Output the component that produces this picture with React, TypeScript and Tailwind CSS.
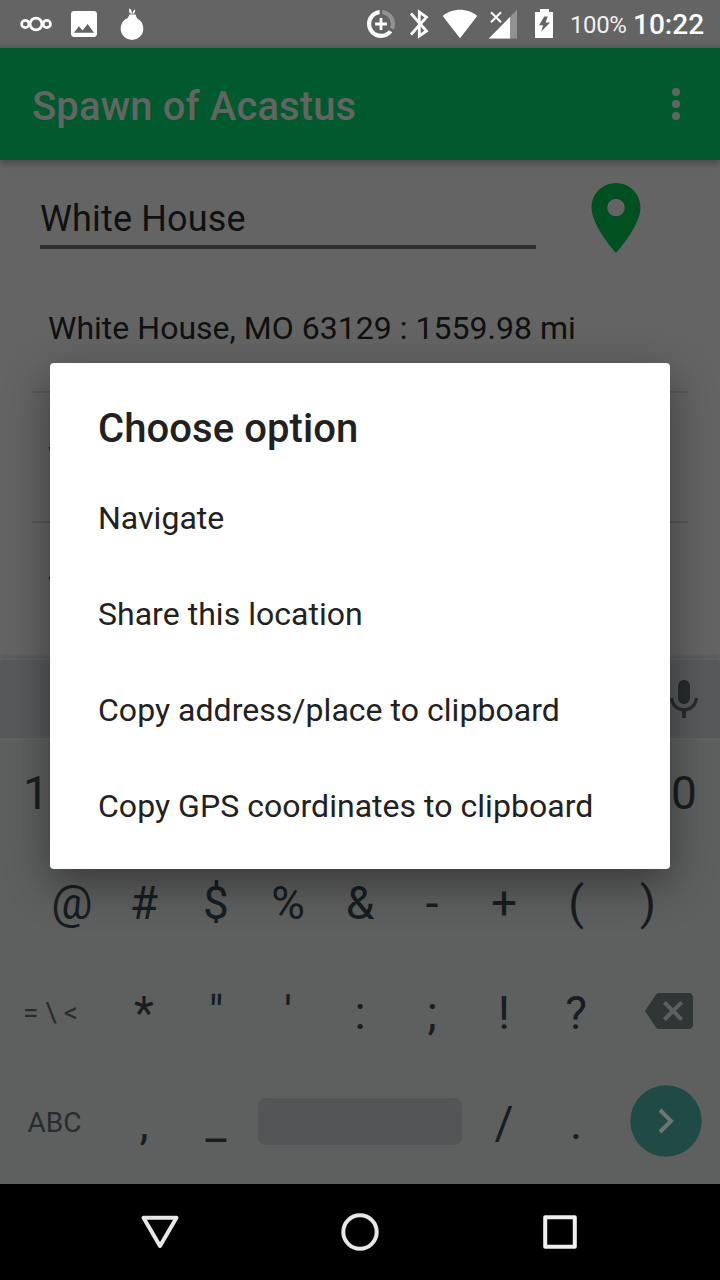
import type { ReactNode } from "react";

function StatusIcon({ viewBox, className, children }: { viewBox: string; className: string; children: ReactNode }) {
  return (
    <svg viewBox={viewBox} className={`h-12 shrink-0 ${className}`} fill="#fff">
      {children}
    </svg>
  );
}

function StatusBar() {
  return (
    <header className="flex h-12 items-center bg-gradient-to-b from-[#646464] from-85% to-[#5c5c5c] text-white">
      <StatusIcon viewBox="0 0 56 48" className="w-14">
        <g fill="none" stroke="#fff" strokeWidth="2.7">
          <circle cx="25.3" cy="24" r="3.7" />
          <circle cx="36" cy="24" r="5.9" />
          <circle cx="46.8" cy="24" r="3.7" />
        </g>
      </StatusIcon>
      <StatusIcon viewBox="56 0 52 48" className="w-[52px]">
        <path
          transform="translate(66.67 6.67) scale(1.444)"
          d="M21 19V5c0-1.1-.9-2-2-2H5c-1.1 0-2 .9-2 2v14c0 1.100.9 2 2 2h14c1.100 0 2-.9 2-2zM8.500 13.500l2.500 3.010L14.500 12l4.500 6H5l3.500-4.500z"
        />
      </StatusIcon>
      <StatusIcon viewBox="108 0 48 48" className="w-12">
        <circle cx="132" cy="28.600" r="11.300" />
        <path d="M127.500 18.500L129.500 14.500h6l1.500 4zM130.800 13.800C128.600 12.500 128.800 10.500 129.600 8.300c2 1.800 2.500 3.300 2.200 5.500zM132.500 13.800c.1-2 .7-3.600 2.600-4.300.3 2-.2 3.400-1.400 4.300z" />
      </StatusIcon>
      <div className="grow" />
      <StatusIcon viewBox="360 0 42 48" className="w-[42px]">
        <g transform="translate(364.200 7.200) scale(1.400)">
          <path
            opacity=".3"
            d="M13 2.050v3.030c3.390.49 6 3.390 6 6.920 0 .9-.18 1.750-.48 2.540l2.600 1.530c.56-1.240.88-2.620.88-4.070 0-5.180-3.950-9.450-9-9.950z"
          />
          <path d="M12 19c-3.870 0-7-3.130-7-7 0-3.530 2.610-6.430 6-6.920V2.050c-5.060.5-9 4.760-9 9.950 0 5.520 4.470 10 9.990 10 3.310 0 6.240-1.610 8.060-4.090l-2.600-1.530A6.950 6.950 0 0 1 12 19z" />
          <path d="M11 7.800h2v3.200h3.200v2H13v3.200h-2V13H7.800v-2H11z" />
        </g>
      </StatusIcon>
      <StatusIcon viewBox="402 0 34 48" className="w-[34px]">
        <path
          d="M411 13.500L426.500 31L419.300 36V12L426.500 17.200L411 34.500"
          fill="none"
          stroke="#fff"
          strokeWidth="2.800"
        />
      </StatusIcon>
      <StatusIcon viewBox="436 0 46 48" className="w-[46px]">
        <path d="M442.700 16C452 7.700 468 7.700 477.200 16L460 38.200z" />
      </StatusIcon>
      <StatusIcon viewBox="482 0 44 48" className="w-11">
        <path opacity=".3" d="M488.800 38.500L517 9.800V38.500z" />
        <path d="M488.800 38.500L510 17V38.500z" />
        <path d="M491 12.200L501 22.200M501 12.200L491 22.200" stroke="#fff" strokeWidth="2" />
      </StatusIcon>
      <StatusIcon viewBox="526 0 36 48" className="w-9">
        <path d="M540 9h9v3h4v26h-18V12h5z" />
        <path d="M544.300 16.500L539 25.300h4.200L541.200 31.500L550.200 22.500h-4.700L547.800 16.500z" fill="#646464" />
      </StatusIcon>
      <span className="ml-2 mt-0.5 w-[63px] shrink-0 whitespace-nowrap text-[24px] leading-[48px] tracking-[-0.4px] text-[#f0f0f0]">
        100%
      </span>
      <span className="mt-0.5 w-[87px] shrink-0 whitespace-nowrap text-[28px] font-medium leading-[48px]">10:22</span>
    </header>
  );
}

function AppBar() {
  return (
    <div className="relative flex h-28 shrink-0 items-center justify-between bg-[#005a2e] pl-8 pr-6 shadow-[0_3px_7px_rgba(0,0,0,0.3)]">
      <h1 className="pt-1.5 text-[40px] font-medium leading-[48px] tracking-[0.1px] text-[#646464]">Spawn of Acastus</h1>
      <svg className="h-10 w-10" viewBox="0 0 40 40" fill="#646464">
        <circle cx="20" cy="8" r="4" />
        <circle cx="20" cy="20" r="4" />
        <circle cx="20" cy="32" r="4" />
      </svg>
    </div>
  );
}

const places = ["White House, MO 63129 : 1559.98 mi", "W", "W"];

function Search() {
  return (
    <main className="h-[498px] shrink-0 overflow-hidden bg-[#646464] text-[#101010]">
      <div className="flex h-[103px] pl-10">
        <div className="mt-8 h-[57px] w-[496px] border-b-4 border-[#2e302f] text-[36px] leading-[55px] tracking-[0.15px]">
          White House
        </div>
        <svg className="ml-[38px] mt-4 h-[84px] w-[84px]" viewBox="0 0 24 24" fill="#005020">
          <path d="M12 2C8.130 2 5 5.130 5 9c0 5.250 7 13 7 13s7-7.750 7-13c0-3.870-3.130-7-7-7zm0 9.500a2.500 2.500 0 0 1 0-5 2.500 2.500 0 0 1 0 5z" />
        </svg>
      </div>
      <ul className="mx-8 divide-y-2 divide-[#575757]">
        {places.map((place, i) => (
          <li key={i} className="h-[130px] pl-4 text-[32px] leading-[130px] tracking-[0.02px]">
            {place}
          </li>
        ))}
      </ul>
    </main>
  );
}

function Key({ children }: { children: ReactNode }) {
  return <span className="w-[72px] text-center">{children}</span>;
}

function Keys({ row }: { row: string[] }) {
  return (
    <>
      {row.map((k) => (
        <Key key={k}>{k}</Key>
      ))}
    </>
  );
}

function Keyboard() {
  return (
    <section className="h-[526px] shrink-0 bg-[#5e605f] text-[46px] leading-[110px] text-[#171d21]">
      <div className="flex h-20 items-center justify-end border-t-2 border-[#606162] bg-[#58595b] pr-[12.5px] shadow-[0_-2px_3px_rgba(0,0,0,0.12)]">
        <svg className="mt-0.5 h-12 w-12" viewBox="0 0 24 24" fill="#272c2d">
          <path d="M12 14c1.660 0 2.990-1.340 2.990-3L15 5c0-1.660-1.340-3-3-3S9 3.340 9 5v6c0 1.660 1.340 3 3 3zm5.300-3c0 3-2.540 5.100-5.300 5.100S6.700 14 6.700 11H5c0 3.410 2.720 6.230 6 6.720V21h2v-3.280c3.280-.48 6-3.300 6-6.720h-1.700z" />
        </svg>
      </div>
      <div className="flex h-[110px] justify-between border-t-2 border-[#626463] leading-[106px]">
        <Key>1</Key>
        <Key>0</Key>
      </div>
      <div className="flex h-[110px] px-9">
        <Keys row={["@", "#", "$", "%", "&", "-", "+", "(", ")"]} />
      </div>
      <div className="flex h-[110px] items-center">
        <span className="w-[108px] pl-[23px] text-[28px] text-[#272c2e]">= \ &lt;</span>
        <Keys row={["*", '"', "'", ":", ";", "!", "?"]} />
        <svg className="mb-1 ml-[33px] h-12 w-12" viewBox="0 0 24 24" fill="#303636">
          <path d="M22 3H7c-.69 0-1.230.35-1.590.88L0 12l5.410 8.110c.36.53.9.89 1.590.89h15c1.100 0 2-.9 2-2V5c0-1.100-.9-2-2-2zm-3 12.590L17.590 17 14 13.410 10.410 17 9 15.590 12.590 12 9 8.410 10.410 7 14 10.590 17.590 7 19 8.410 15.410 12 19 15.590z" />
        </svg>
      </div>
      <div className="flex h-[110px] items-center">
        <span className="w-[108px] pl-px text-center text-[28px] text-[#272c2e]">ABC</span>
        <Keys row={[",", "_"]} />
        <span className="mx-1.5 mb-[3px] h-[47px] w-[204px] rounded-lg bg-[#545557]" />
        <Keys row={["/", "."]} />
        <svg className="mb-1 ml-[18px] h-[72px] w-[72px]" viewBox="0 0 72 72">
          <circle cx="36" cy="36" r="35.700" fill="#1f4a46" />
          <path d="M30 25L41 36L30 47" fill="none" stroke="#727473" strokeWidth="4" />
        </svg>
      </div>
    </section>
  );
}

function NavigationBar() {
  return (
    <nav className="flex h-24 shrink-0 items-center justify-center gap-[152px] bg-black">
      <svg className="h-12 w-12" viewBox="0 0 48 48" fill="none" stroke="#e8e8e8" strokeWidth="4" strokeLinejoin="round">
        <path d="M7.500 9.700H40.500L24 38z" />
      </svg>
      <svg className="h-12 w-12" viewBox="0 0 48 48" fill="none" stroke="#e8e8e8" strokeWidth="4">
        <circle cx="24" cy="24" r="16.700" />
      </svg>
      <svg className="h-12 w-12" viewBox="0 0 48 48" fill="none" stroke="#f0f0f0" strokeWidth="4" strokeLinejoin="round">
        <path d="M9.200 9.200H38.800V38.800H9.200z" />
      </svg>
    </nav>
  );
}

const options = ["Navigate", "Share this location", "Copy address/place to clipboard", "Copy GPS coordinates to clipboard"];

function OptionsDialog() {
  return (
    <div
      role="dialog"
      className="absolute left-[50px] top-[363px] h-[505.500px] w-[620px] rounded bg-white px-12 pt-[42px] text-[#212121] shadow-[0_14px_44px_rgba(0,0,0,0.42)]"
    >
      <h2 className="h-[65px] text-[40px] font-medium leading-[48px] tracking-[0.08px]">Choose option</h2>
      {options.map((option) => (
        <div key={option} className="h-24 text-[32px] leading-[96px] tracking-[0.03px]">
          {option}
        </div>
      ))}
    </div>
  );
}

export default function App() {
  return (
    <div className="relative flex h-[1280px] w-[720px] flex-col overflow-hidden bg-[#646464] font-['Roboto',sans-serif]">
      <StatusBar />
      <AppBar />
      <Search />
      <Keyboard />
      <NavigationBar />
      <OptionsDialog />
    </div>
  );
}
